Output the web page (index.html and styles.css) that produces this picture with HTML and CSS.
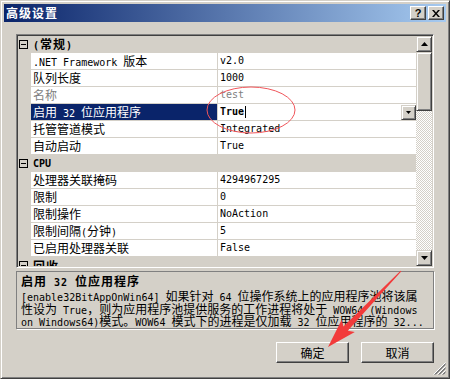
FILE: index.html
```html
<!DOCTYPE html>
<html lang="zh-CN">
<head>
    <meta charset="UTF-8">
    <title>高级设置</title>
    <link rel="stylesheet" href="styles.css">
</head>
<body>

    <div class="window">
        <div class="titlebar">
            <span class="title">高级设置</span>
            <div class="caption-btns">
                <span class="cbtn help">?</span>
                <span class="cbtn close">
                    <svg width="8" height="7" viewBox="0 0 8 7"><path d="M0 0h2l2 2.4L6 0h2L5 3.5 8 7H6L4 4.6 2 7H0l3-3.5z"/></svg>
                </span>
            </div>
        </div>

        <div class="dialog-body">
            <div class="prop-grid">
                <div class="rows">
                    <div class="cat"><span class="toggle"></span><span class="cat-name"><span class="en">(</span>常规<span class="en">)</span></span></div>
                    <div class="prop"><span class="margin"></span><span class="name"><span class="en">.NET Framework </span>版本</span><span class="value en">v2.0</span></div>
                    <div class="prop"><span class="margin"></span><span class="name">队列长度</span><span class="value en">1000</span></div>
                    <div class="prop disabled"><span class="margin"></span><span class="name">名称</span><span class="value en">test</span></div>
                    <div class="prop"><span class="margin"></span><span class="name selected">启用<span class="en"> 32 </span>位应用程序</span><span class="value editing"><span class="en strong">True</span><span class="caret"></span><span class="dd-btn"><svg width="5" height="3" viewBox="0 0 5 3"><path d="M0 0h5L2.5 3z"/></svg></span></span></div>
                    <div class="prop"><span class="margin"></span><span class="name">托管管道模式</span><span class="value en">Integrated</span></div>
                    <div class="prop"><span class="margin"></span><span class="name">自动启动</span><span class="value en">True</span></div>
                    <div class="cat"><span class="toggle"></span><span class="cat-name en">CPU</span></div>
                    <div class="prop"><span class="margin"></span><span class="name">处理器关联掩码</span><span class="value en">4294967295</span></div>
                    <div class="prop"><span class="margin"></span><span class="name">限制</span><span class="value en">0</span></div>
                    <div class="prop"><span class="margin"></span><span class="name">限制操作</span><span class="value en">NoAction</span></div>
                    <div class="prop"><span class="margin"></span><span class="name">限制间隔<span class="en">(</span>分钟<span class="en">)</span></span><span class="value en">5</span></div>
                    <div class="prop"><span class="margin"></span><span class="name">已启用处理器关联</span><span class="value en">False</span></div>
                    <div class="cat"><span class="toggle"></span><span class="cat-name">回收</span></div>
                </div>
                <div class="vscroll">
                    <span class="sb-btn"><svg width="7" height="4" viewBox="0 0 7 4"><path d="M3.5 0L7 4H0z"/></svg></span>
                    <span class="sb-thumb"></span>
                    <span class="sb-track"></span>
                    <span class="sb-btn"><svg width="7" height="4" viewBox="0 0 7 4"><path d="M0 0h7L3.5 4z"/></svg></span>
                </div>
            </div>

            <div class="desc">
                <div class="desc-title">启用<span class="en"> 32 </span>位应用程序</div>
                <div class="line"><span class="en">[enable32BitAppOnWin64] </span>如果针对<span class="en"> 64 </span>位操作系统上的应用程序池将该属</div>
                <div class="line">性设为<span class="en"> True</span>，则为应用程序池提供服务的工作进程将处于<span class="en"> WOW64 (Windows</span></div>
                <div class="line"><span class="en">on Windows64)</span>模式。<span class="en">WOW64 </span>模式下的进程是仅加载<span class="en"> 32 </span>位应用程序的<span class="en"> 32...</span></div>
            </div>

            <div class="actions">
                <button class="btn">确定</button>
                <button class="btn">取消</button>
            </div>

            <svg class="grip" width="13" height="13" viewBox="0 0 13 13">
                <g stroke-width="1">
                    <path d="M12.5 1.5L1.5 12.5M12.5 2.5L2.5 12.5" stroke="#808080"/>
                    <path d="M12.5 0.5L0.5 12.5" stroke="#fff"/>
                    <path d="M12.5 5.5L5.5 12.5M12.5 6.5L6.5 12.5" stroke="#808080"/>
                    <path d="M12.5 4.5L4.5 12.5" stroke="#fff"/>
                    <path d="M12.5 9.5L9.5 12.5M12.5 10.5L10.5 12.5" stroke="#808080"/>
                    <path d="M12.5 8.5L8.5 12.5" stroke="#fff"/>
                </g>
            </svg>
        </div>
    </div>

    <!-- red marks drawn over the screenshot -->
    <svg class="annot" width="450" height="379" viewBox="0 0 450 379">
        <ellipse cx="251" cy="110" rx="44" ry="23" fill="none" stroke="#f0555a" stroke-width="1"/>
        <polygon fill="#f23b3b" points="401.4,271.3 347.8,330.8 354.8,332 328,347 341.8,319.6 343.4,326.6 400.6,270.7"/>
    </svg>

</body>
</html>
```

FILE: styles.css
```css
* { margin: 0; padding: 0; box-sizing: border-box; }

body {
    width: 450px;
    height: 379px;
    overflow: hidden;
    background: #d4d0c8;
    font-family: "Noto Sans CJK SC", sans-serif;
    font-size: 12px;
    color: #000;
}

/* latin runs: half-width like SimSun */
.en { font-family: "DejaVu Sans Mono", monospace; font-size: 10px; }
.strong { font-weight: bold; }

.window {
    width: 450px;
    height: 379px;
    padding: 3px;
    display: flex;
    flex-direction: column;
    background: #d4d0c8;
    border: 1px solid;
    border-color: #d4d0c8 #404040 #404040 #d4d0c8;
    box-shadow: inset 1px 1px #fff, inset -1px -1px #808080;
}

.titlebar {
    height: 18px;
    flex: none;
    display: flex;
    align-items: center;
    padding: 0 2px;
    background: linear-gradient(to right, #0a246a, #a6caf0);
}
.title { flex: 1; color: #fff; font-weight: bold; letter-spacing: 1px; line-height: 18px; }
.caption-btns { display: flex; gap: 2px; }
.cbtn {
    width: 16px; height: 14px;
    display: flex; align-items: center; justify-content: center;
    background: #d4d0c8;
    border: 1px solid;
    border-color: #fff #404040 #404040 #fff;
    box-shadow: inset -1px -1px #808080;
}
.help { font: bold 11px/1 "Liberation Sans", sans-serif; }

.dialog-body {
    flex: 1;
    position: relative;
    display: flex;
    flex-direction: column;
    padding: 12px 12px 0;
}

/* property grid */
.prop-grid {
    height: 234px;
    flex: none;
    display: flex;
    padding: 1px;
    background: #d4d0c8;
    border: 1px solid;
    border-color: #808080 #fff #fff #808080;
    box-shadow: inset 1px 1px #404040, inset -1px -1px #d4d0c8;
}
.rows { flex: 1; overflow: hidden; }

.prop, .cat { display: flex; height: 17px; }
.margin { width: 13px; flex: none; }
.name, .value {
    height: 17px;
    line-height: 16px;
    padding-left: 2px;
    white-space: pre;
    overflow: hidden;
    background: #fff;
    border-bottom: 1px solid #d4d0c8;
}
.name { width: 187px; flex: none; border-right: 1px solid #d4d0c8; }
.value { flex: 1; }
.name.selected { background: #0a246a; color: #fff; }
.disabled .name, .disabled .value { color: #808080; }

.value.editing { display: flex; align-items: center; }
.caret { width: 1px; height: 12px; margin-left: 1px; background: #000; }
.dd-btn {
    width: 15px; height: 15px;
    margin-left: auto;
    align-self: flex-end;
    display: flex; align-items: center; justify-content: center;
    background: #d4d0c8;
    border: 1px solid;
    border-color: #d4d0c8 #404040 #404040 #d4d0c8;
    box-shadow: inset 1px 1px #fff, inset -1px -1px #808080;
}

.cat { align-items: center; }
.toggle {
    width: 9px; height: 9px;
    margin: 0 3px 0 1px;
    flex: none;
    position: relative;
    border: 1px solid #000;
}
.toggle::after {
    content: "";
    position: absolute;
    left: 1px; top: 3px;
    width: 5px; height: 1px;
    background: #000;
}
.cat-name { padding-left: 2px; font-weight: bold; letter-spacing: 1px; line-height: 16px; }
.cat-name.en { font-size: 10px; letter-spacing: 0; }

/* scrollbar */
.vscroll { width: 16px; flex: none; display: flex; flex-direction: column; }
.sb-btn, .sb-thumb {
    flex: none;
    display: flex; align-items: center; justify-content: center;
    background: #d4d0c8;
    border: 1px solid;
    border-color: #d4d0c8 #404040 #404040 #d4d0c8;
    box-shadow: inset 1px 1px #fff, inset -1px -1px #808080;
}
.sb-btn { height: 16px; }
.sb-thumb { height: 59px; }
.sb-track {
    flex: 1;
    background: repeating-conic-gradient(#d4d0c8 0 25%, #fff 0 50%) 0 0 / 2px 2px;
}

/* description panel */
.desc {
    height: 58px;
    flex: none;
    margin-top: 3px;
    padding: 2px 4px 0;
    overflow: hidden;
    border: 1px solid #808080;
    box-shadow: 1px 1px #fff;
}
.desc-title { height: 16px; font-weight: bold; letter-spacing: 1px; line-height: 14px; }
.desc .line { height: 12.5px; line-height: 12px; white-space: pre; overflow: visible; }

.actions { display: flex; justify-content: flex-end; gap: 12px; margin-top: 13px; }
.btn {
    width: 73px; height: 21px;
    font-family: "Noto Sans CJK SC", sans-serif;
    font-size: 12px;
    line-height: 17px;
    color: #000;
    background: #d4d0c8;
    border: 1px solid;
    border-color: #fff #404040 #404040 #fff;
    box-shadow: inset -1px -1px #808080;
}

.grip { position: absolute; right: 0; bottom: 0; }

.annot { position: absolute; left: 0; top: 0; pointer-events: none; }
```
